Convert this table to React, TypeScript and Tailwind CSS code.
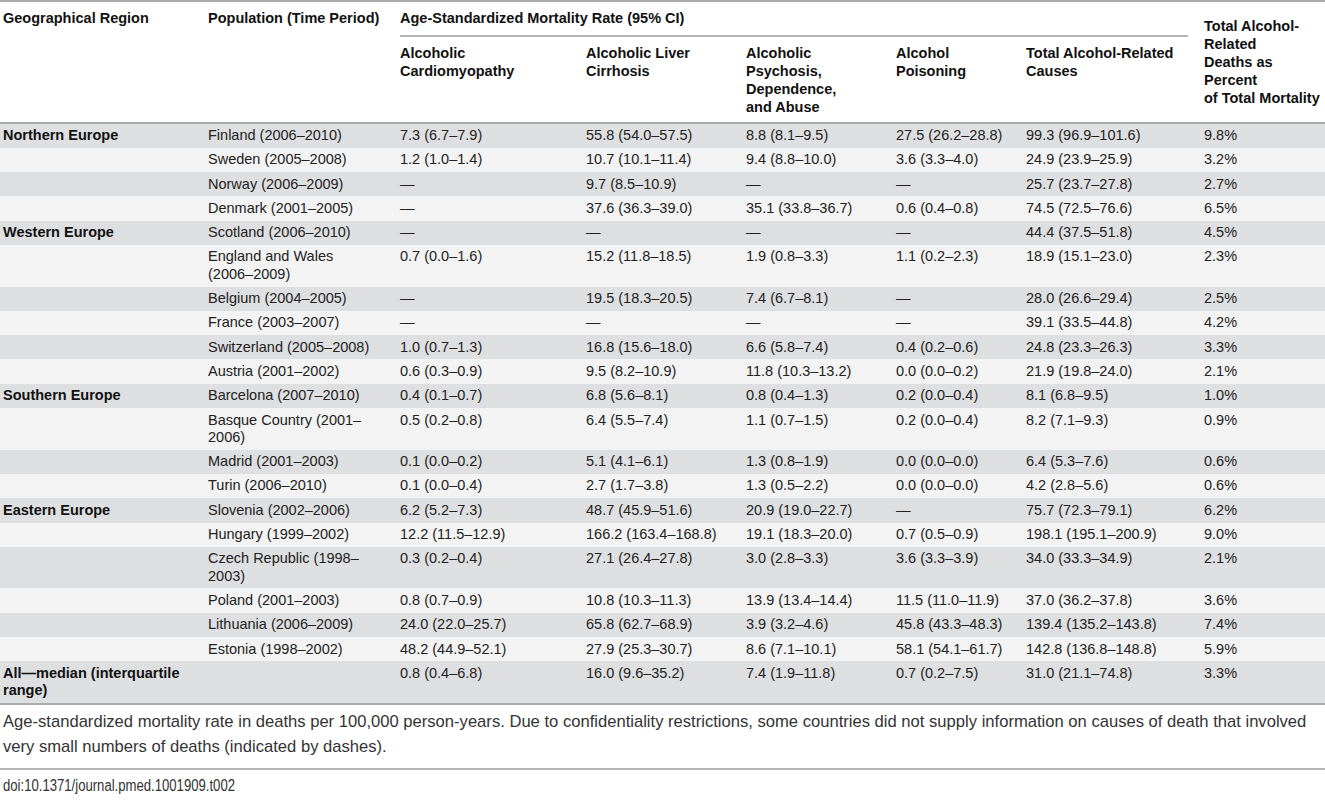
import React from 'react';

type Row = {
  region?: React.ReactNode;
  pop: React.ReactNode;
  vals: string[];
};

const D = '—';

const rows: Row[] = [
  { region: 'Northern Europe', pop: 'Finland (2006–2010)', vals: ['7.3 (6.7–7.9)', '55.8 (54.0–57.5)', '8.8 (8.1–9.5)', '27.5 (26.2–28.8)', '99.3 (96.9–101.6)', '9.8%'] },
  { pop: 'Sweden (2005–2008)', vals: ['1.2 (1.0–1.4)', '10.7 (10.1–11.4)', '9.4 (8.8–10.0)', '3.6 (3.3–4.0)', '24.9 (23.9–25.9)', '3.2%'] },
  { pop: 'Norway (2006–2009)', vals: [D, '9.7 (8.5–10.9)', D, D, '25.7 (23.7–27.8)', '2.7%'] },
  { pop: 'Denmark (2001–2005)', vals: [D, '37.6 (36.3–39.0)', '35.1 (33.8–36.7)', '0.6 (0.4–0.8)', '74.5 (72.5–76.6)', '6.5%'] },
  { region: 'Western Europe', pop: 'Scotland (2006–2010)', vals: [D, D, D, D, '44.4 (37.5–51.8)', '4.5%'] },
  { pop: <>England and Wales<br />(2006–2009)</>, vals: ['0.7 (0.0–1.6)', '15.2 (11.8–18.5)', '1.9 (0.8–3.3)', '1.1 (0.2–2.3)', '18.9 (15.1–23.0)', '2.3%'] },
  { pop: 'Belgium (2004–2005)', vals: [D, '19.5 (18.3–20.5)', '7.4 (6.7–8.1)', D, '28.0 (26.6–29.4)', '2.5%'] },
  { pop: 'France (2003–2007)', vals: [D, D, D, D, '39.1 (33.5–44.8)', '4.2%'] },
  { pop: 'Switzerland (2005–2008)', vals: ['1.0 (0.7–1.3)', '16.8 (15.6–18.0)', '6.6 (5.8–7.4)', '0.4 (0.2–0.6)', '24.8 (23.3–26.3)', '3.3%'] },
  { pop: 'Austria (2001–2002)', vals: ['0.6 (0.3–0.9)', '9.5 (8.2–10.9)', '11.8 (10.3–13.2)', '0.0 (0.0–0.2)', '21.9 (19.8–24.0)', '2.1%'] },
  { region: 'Southern Europe', pop: 'Barcelona (2007–2010)', vals: ['0.4 (0.1–0.7)', '6.8 (5.6–8.1)', '0.8 (0.4–1.3)', '0.2 (0.0–0.4)', '8.1 (6.8–9.5)', '1.0%'] },
  { pop: <>Basque Country (2001–<br />2006)</>, vals: ['0.5 (0.2–0.8)', '6.4 (5.5–7.4)', '1.1 (0.7–1.5)', '0.2 (0.0–0.4)', '8.2 (7.1–9.3)', '0.9%'] },
  { pop: 'Madrid (2001–2003)', vals: ['0.1 (0.0–0.2)', '5.1 (4.1–6.1)', '1.3 (0.8–1.9)', '0.0 (0.0–0.0)', '6.4 (5.3–7.6)', '0.6%'] },
  { pop: 'Turin (2006–2010)', vals: ['0.1 (0.0–0.4)', '2.7 (1.7–3.8)', '1.3 (0.5–2.2)', '0.0 (0.0–0.0)', '4.2 (2.8–5.6)', '0.6%'] },
  { region: 'Eastern Europe', pop: 'Slovenia (2002–2006)', vals: ['6.2 (5.2–7.3)', '48.7 (45.9–51.6)', '20.9 (19.0–22.7)', D, '75.7 (72.3–79.1)', '6.2%'] },
  { pop: 'Hungary (1999–2002)', vals: ['12.2 (11.5–12.9)', '166.2 (163.4–168.8)', '19.1 (18.3–20.0)', '0.7 (0.5–0.9)', '198.1 (195.1–200.9)', '9.0%'] },
  { pop: <>Czech Republic (1998–<br />2003)</>, vals: ['0.3 (0.2–0.4)', '27.1 (26.4–27.8)', '3.0 (2.8–3.3)', '3.6 (3.3–3.9)', '34.0 (33.3–34.9)', '2.1%'] },
  { pop: 'Poland (2001–2003)', vals: ['0.8 (0.7–0.9)', '10.8 (10.3–11.3)', '13.9 (13.4–14.4)', '11.5 (11.0–11.9)', '37.0 (36.2–37.8)', '3.6%'] },
  { pop: 'Lithuania (2006–2009)', vals: ['24.0 (22.0–25.7)', '65.8 (62.7–68.9)', '3.9 (3.2–4.6)', '45.8 (43.3–48.3)', '139.4 (135.2–143.8)', '7.4%'] },
  { pop: 'Estonia (1998–2002)', vals: ['48.2 (44.9–52.1)', '27.9 (25.3–30.7)', '8.6 (7.1–10.1)', '58.1 (54.1–61.7)', '142.8 (136.8–148.8)', '5.9%'] },
  { region: <>All—median (interquartile<br />range)</>, pop: '', vals: ['0.8 (0.4–6.8)', '16.0 (9.6–35.2)', '7.4 (1.9–11.8)', '0.7 (0.2–7.5)', '31.0 (21.1–74.8)', '3.3%'] },
];

const subHeads: React.ReactNode[] = [
  <>Alcoholic<br />Cardiomyopathy</>,
  <>Alcoholic Liver<br />Cirrhosis</>,
  <>Alcoholic<br />Psychosis,<br />Dependence,<br />and Abuse</>,
  <>Alcohol<br />Poisoning</>,
  <>Total Alcohol-Related<br />Causes</>,
];

export default function App() {
  return (
    <div className="w-[1325px] bg-white text-[#222] font-['Liberation_Sans',Arial,sans-serif]">
      <table className="w-full table-fixed border-collapse text-[14.5px]">
        <colgroup>
          <col className="w-[205px]" />
          <col className="w-[192px]" />
          <col className="w-[186px]" />
          <col className="w-[160px]" />
          <col className="w-[150px]" />
          <col className="w-[130px]" />
          <col className="w-[178px]" />
          <col className="w-[124px]" />
        </colgroup>
        <thead className="font-bold text-[#111] leading-[18px] text-left">
          <tr className="border-t-2 border-[#ababab]">
            <th className="align-top pl-[3px] pt-[7px] whitespace-nowrap">Geographical Region</th>
            <th className="align-top pl-[3px] pt-[7px] whitespace-nowrap">Population (Time Period)</th>
            <th colSpan={5} className="align-top p-0 pt-[7px]">
              <div className="pl-[3px] pb-[8px] whitespace-nowrap">Age-Standardized Mortality Rate (95% CI)</div>
              <div className="h-[1.5px] bg-[#b5b5b5] ml-[3px] mr-[13px]" />
            </th>
            <th rowSpan={2} className="align-middle pl-[3px] whitespace-nowrap">
              Total Alcohol-<br />Related<br />Deaths as<br />Percent<br />of Total Mortality
            </th>
          </tr>
          <tr className="border-b-2 border-[#ababab]">
            <th />
            <th />
            {subHeads.map((h, i) => (
              <th key={i} className="align-top pl-[3px] pt-[7px] pb-[6px] whitespace-nowrap">
                {h}
              </th>
            ))}
          </tr>
        </thead>
        <tbody className="leading-[17.3px]">
          {rows.map((r, i) => (
            <tr key={i} className={i % 2 === 0 ? 'bg-[#dedfe1]' : 'bg-[#f3f3f3]'}>
              <td className="align-top pl-[3px] py-[3.5px] font-bold text-[#111] whitespace-nowrap">{r.region}</td>
              <td className="align-top pl-[3px] py-[3.5px] whitespace-nowrap">{r.pop}</td>
              {r.vals.map((v, j) => (
                <td key={j} className="align-top pl-[3px] py-[3.5px] whitespace-nowrap">
                  {v}
                </td>
              ))}
            </tr>
          ))}
        </tbody>
      </table>
      <div className="border-t-2 border-[#ababab]" />
      <p className="pl-[3px] pt-[4px] pb-[9px] text-[16.6px] leading-[25px] text-[#333]">
        Age-standardized mortality rate in deaths per 100,000 person-years. Due to confidentiality restrictions, some countries did not supply information on causes of death that involved very small numbers of deaths (indicated by dashes).
      </p>
      <div className="border-t-2 border-[#b5b5b5]" />
      <div className="pl-[3px] pt-[6px] text-[16px] leading-[20px] text-[#333]">
        <span className="inline-block origin-left scale-x-[0.82]">doi:10.1371/journal.pmed.1001909.t002</span>
      </div>
    </div>
  );
}
